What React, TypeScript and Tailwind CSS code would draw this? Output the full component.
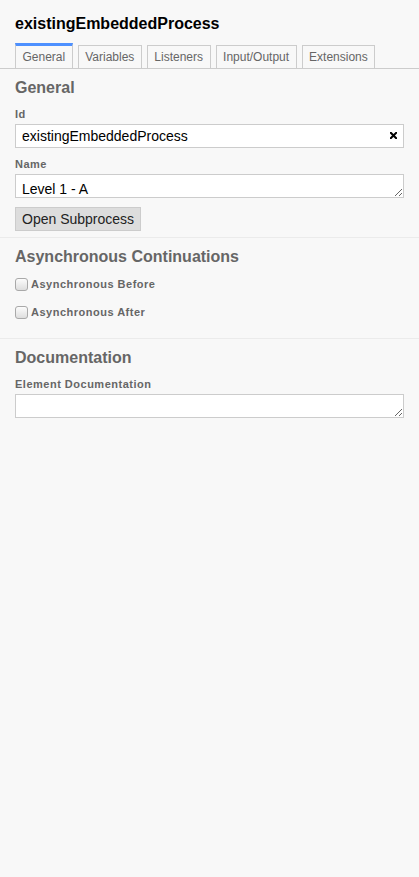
import { useState } from 'react';

const tabs = ['General', 'Variables', 'Listeners', 'Input/Output', 'Extensions'];

function Label({ children, className = '' }: { children: React.ReactNode; className?: string }) {
  return (
    <label className={`block text-[11px] leading-[13px] font-bold tracking-[0.5px] text-[#666] ${className}`}>
      {children}
    </label>
  );
}

function SectionTitle({ children }: { children: React.ReactNode }) {
  return <h2 className="text-[16px] leading-[21px] font-bold text-[#666]">{children}</h2>;
}

function CheckRow({ label }: { label: string }) {
  return (
    <div className="flex items-center h-[13px] gap-[3px]">
      <input
        type="checkbox"
        className="m-0 w-[13px] h-[13px] appearance-none rounded-[3px] border border-[#a9a9a9] bg-gradient-to-b from-[#fcfcfc] to-[#dedede] checked:bg-[#4d90ff]"
      />
      <span className="text-[11px] leading-[13px] font-bold tracking-[0.5px] text-[#666]">{label}</span>
    </div>
  );
}

export default function App() {
  const [active, setActive] = useState('General');
  const [id, setId] = useState('existingEmbeddedProcess');

  return (
    <div className="min-h-[877px] bg-[#f8f8f8] font-['Liberation_Sans',Arial,sans-serif] text-black">
      {/* header */}
      <div className="px-[15px] pt-[14px]">
        <h1 className="text-[16px] leading-[20px] font-bold">existingEmbeddedProcess</h1>
      </div>

      {/* tabs */}
      <div className="mt-[9px] h-[26px] border-b border-[#ccc] flex items-end gap-[5px] pl-[15px]">
        {tabs.map((t) => (
          <button
            key={t}
            onClick={() => setActive(t)}
            className={
              t === active
                ? 'h-[25px] px-[6.5px] border-x border-[#ccc] border-t-[3px] border-t-[#4d90ff] text-[12px] leading-[22px] text-[#666]'
                : 'h-[23px] px-[6.5px] border-x border-t border-[#ccc] text-[12px] leading-[22px] text-[#666]'
            }
          >
            {t}
          </button>
        ))}
      </div>

      {/* General */}
      <section className="px-[15px] pt-[8px] pb-[6px] border-b border-[#ebebeb]">
        <SectionTitle>General</SectionTitle>
        <Label className="mt-[10px]">Id</Label>
        <div className="relative mt-[3px]">
          <input
            value={id}
            onChange={(e) => setId(e.target.value)}
            className="block w-full h-[24px] border border-[#ccc] bg-white pl-[6px] pr-[24px] text-[14px] outline-none"
          />
          <button className="absolute right-[7px] top-[8px] w-[7px] h-[7px]" onClick={() => setId('')}>
            <svg viewBox="0 0 7 7" width="7" height="7" className="block">
              <path d="M0.8 0.8 L6.2 6.2 M6.2 0.8 L0.8 6.2" stroke="#000" strokeWidth="2" strokeLinecap="square" />
            </svg>
          </button>
        </div>
        <Label className="mt-[10px]">Name</Label>
        <textarea
          defaultValue="Level 1 - A"
          className="block mt-[3px] w-full h-[24px] border border-[#ccc] bg-white px-[6px] pt-[5px] pb-0 text-[14px] leading-[18px] overflow-hidden outline-none resize-y"
        />
        <button className="mt-[9px] h-[24px] px-[6px] bg-[#ddd] border border-[#ccc] text-[14px] text-[#222]">
          Open Subprocess
        </button>
      </section>

      {/* Asynchronous Continuations */}
      <section className="px-[15px] pt-[8px] pb-[19px] border-b border-[#ebebeb]">
        <SectionTitle>Asynchronous Continuations</SectionTitle>
        <div className="mt-[11px] flex flex-col gap-[15px]">
          <CheckRow label="Asynchronous Before" />
          <CheckRow label="Asynchronous After" />
        </div>
      </section>

      {/* Documentation */}
      <section className="px-[15px] pt-[8px] pb-[6px]">
        <SectionTitle>Documentation</SectionTitle>
        <Label className="mt-[10px]">Element Documentation</Label>
        <textarea className="block mt-[3px] w-full h-[24px] border border-[#ccc] bg-white px-[6px] pt-[5px] pb-0 text-[14px] leading-[18px] overflow-hidden outline-none resize-y" />
      </section>
    </div>
  );
}
